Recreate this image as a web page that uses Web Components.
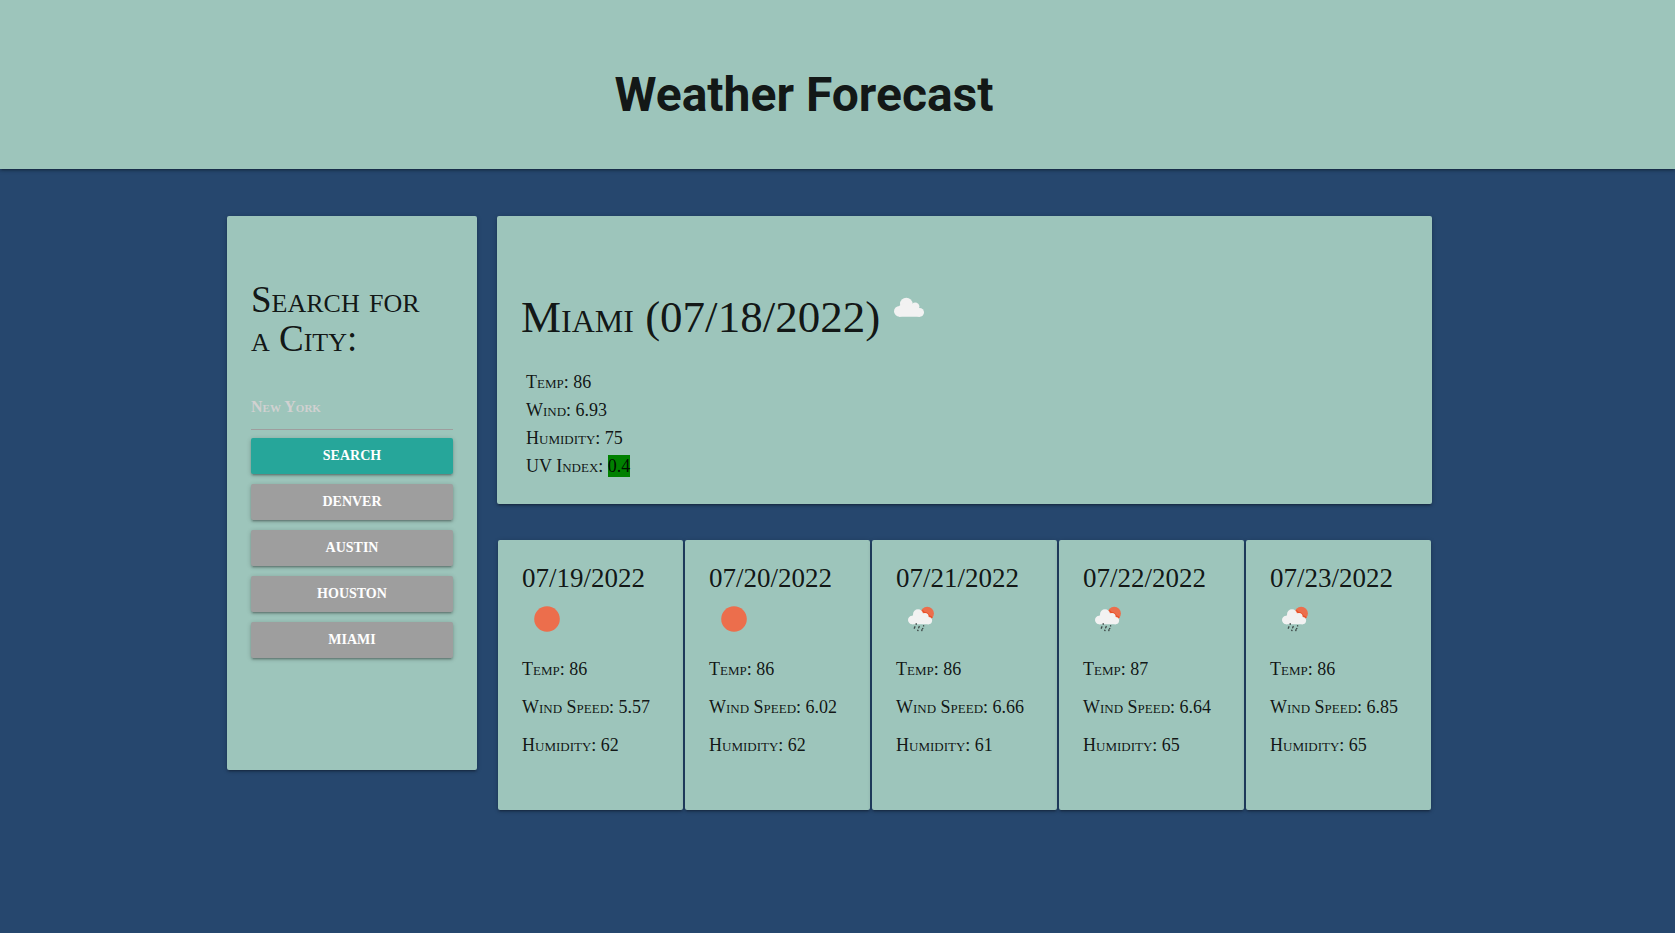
<!DOCTYPE html>
<html lang="en">
<head>
<meta charset="utf-8">
<meta name="viewport" content="width=device-width, initial-scale=1">
<title>Weather Forecast</title>
<style>
  html {
    --panel: #9dc5bb;
    --ink: rgba(0, 0, 0, 0.9);
    --depth: 0 2px 2px 0 rgba(0,0,0,.14), 0 3px 1px -2px rgba(0,0,0,.12), 0 1px 5px 0 rgba(0,0,0,.2);
    background: #26476e;
  }
  body {
    margin: 0;
    color: var(--ink);
    font-family: "Liberation Serif", "Times New Roman", serif;
    font-size: 18px;
  }
</style>
</head>
<body>
<weather-app></weather-app>

<script>
  function define(name, html, setup) {
    const template = document.createElement('template');
    template.innerHTML = html;
    customElements.define(name, class extends HTMLElement {
      constructor() {
        super();
        this.attachShadow({ mode: 'open' }).append(template.content.cloneNode(true));
      }
      connectedCallback() {
        if (setup) setup(this);
      }
    });
  }

  const icons = {
    cloud: `<g fill="#f2f2f2"><circle cx="22.3" cy="21" r="6.3"/><circle cx="31.2" cy="23.6" r="4.2"/>
      <circle cx="15.4" cy="28.3" r="5.4"/><circle cx="35.6" cy="29.3" r="4.4"/>
      <path d="M15 23L22 19L31 22L36 26V33.7H15Z"/></g>`,
    sun: `<circle cx="25" cy="25" r="12.8" fill="#ec6e4c"/>`,
    rain: `<circle cx="31.2" cy="19.5" r="6.7" fill="#ec6e4c"/>
      <path d="M26.2 16.5Q28 17.4 28.3 18.6Q31.5 18.2 33 21.8Q35.6 22.2 36.2 24" fill="none" stroke="#ea4d24" stroke-width="1.2"/>
      <g fill="#f2f2f2"><circle cx="22" cy="20.3" r="5"/><circle cx="29" cy="22.5" r="3.6"/>
      <circle cx="16.2" cy="26" r="4.2"/><circle cx="32.4" cy="26.6" r="3.7"/>
      <path d="M16 22L22 18L29 20L33 24V30.3H16Z"/></g>
      <g stroke="#3f4a49" stroke-width="1.4" stroke-linecap="round"><path d="M20.2 29.7v.5M18.9 32.8l-.6 1.4M23.2 32.6l-.5 1.2M27.6 31.8v.1M26.8 34.4l-.2.2M21.7 36.2l.3.3M26 35.8l-.2.7"/></g>`
  };

  define('weather-icon', `
    <style>
      :host { display: block; flex: none; width: 50px; height: 50px; }
      svg { display: block; width: 100%; height: 100%; }
    </style>
    <svg viewBox="0 0 50 50" aria-hidden="true"></svg>`,
    el => { el.shadowRoot.querySelector('svg').innerHTML = icons[el.getAttribute('kind')] || ''; });

  define('page-banner', `
    <style>
      :host { display: block; background: var(--panel); box-shadow: var(--depth); }
      header { padding: 67px 67px 46px 0; text-align: center; }
      h1 { margin: 0; font: 700 48px/56px Roboto, sans-serif; }
    </style>
    <header><h1><slot></slot></h1></header>`);

  define('panel-card', `
    <style>
      :host { display: block; padding: 24px; border-radius: 2px; background: var(--panel); box-shadow: var(--depth); }
    </style>
    <slot></slot>`);

  define('city-button', `
    <style>
      :host { display: block; --fill: #9e9e9e; }
      :host([primary]) { --fill: #26a69a; }
      button {
        display: block; width: 100%; height: 36px; padding: 0; border: 0; border-radius: 2px;
        background: var(--fill); box-shadow: var(--depth); color: #fff; cursor: pointer;
        font: 700 14px/36px "Liberation Serif", "Times New Roman", serif; text-transform: uppercase;
      }
    </style>
    <button type="button"><slot></slot></button>`);

  define('city-search', `
    <style>
      :host { display: block; }
      panel-card { padding-bottom: 112px; }
      h2 { margin: 40px 0 26px; font-size: 37px; line-height: 39px; font-weight: 400; font-variant: small-caps; }
      input {
        display: block; box-sizing: border-box; width: 100%; height: 46px; margin: 0 0 8px; padding: 0;
        border: 0; border-bottom: 1px solid #9e9e9e; background: none; outline: none; color: inherit;
        font: small-caps 700 16px "Liberation Serif", "Times New Roman", serif;
      }
      input::placeholder { color: #d1d1d1; opacity: 1; }
      .buttons { display: grid; gap: 10px; }
    </style>
    <panel-card>
      <h2><label for="city">Search for<br>a City:</label></h2>
      <input id="city" type="text" placeholder="New York">
      <div class="buttons">
        <city-button primary>Search</city-button>
        <city-button>Denver</city-button>
        <city-button>Austin</city-button>
        <city-button>Houston</city-button>
        <city-button>Miami</city-button>
      </div>
    </panel-card>`);

  define('current-weather', `
    <style>
      :host { display: block; }
      .title { display: flex; gap: 4px; margin-top: 43px; }
      h2 { margin: 0; font-size: 45px; line-height: 68px; font-weight: 400; font-variant: small-caps; }
      ul { margin: 17px 0 0; padding: 0 0 0 5px; list-style: none; line-height: 28px; font-variant: small-caps; }
      .uv { display: inline-block; line-height: 22px; background: #008000; }
    </style>
    <panel-card>
      <div class="title"><h2>Miami (07/18/2022)</h2><weather-icon kind="cloud"></weather-icon></div>
      <ul>
        <li>Temp: 86</li>
        <li>Wind: 6.93</li>
        <li>Humidity: 75</li>
        <li>UV Index: <span class="uv">0.4</span></li>
      </ul>
    </panel-card>`);

  define('forecast-day', `
    <style>
      :host { display: block; }
      panel-card { padding-bottom: 46px; font-variant: small-caps; white-space: nowrap; }
      h3 { margin: 0 0 2px; font-size: 27px; line-height: 28px; font-weight: 400; }
      p { margin: 0; line-height: 38px; }
      weather-icon { margin-bottom: 6px; }
    </style>
    <panel-card>
      <h3></h3>
      <weather-icon></weather-icon>
      <p class="temp"></p>
      <p class="wind"></p>
      <p class="humidity"></p>
    </panel-card>`,
    el => {
      const find = s => el.shadowRoot.querySelector(s);
      find('h3').textContent = el.getAttribute('date');
      find('.temp').textContent = 'Temp: ' + el.getAttribute('temp');
      find('.wind').textContent = 'Wind Speed: ' + el.getAttribute('wind');
      find('.humidity').textContent = 'Humidity: ' + el.getAttribute('humidity');
      const icon = document.createElement('weather-icon');
      icon.setAttribute('kind', el.getAttribute('kind'));
      find('weather-icon').replaceWith(icon);
    });

  define('weather-app', `
    <style>
      :host { display: block; }
      main {
        display: grid; grid-template-columns: 250px minmax(0, 1fr); gap: 20px; align-items: start;
        padding: 47px 243px 40px 227px;
      }
      .days { display: grid; grid-template-columns: repeat(5, minmax(0, 1fr)); gap: 2px; margin: 36px 1px 0; }
      @media (max-width: 1300px) { main { padding-left: 24px; padding-right: 24px; } }
      @media (max-width: 1100px) {
        main { grid-template-columns: minmax(0, 1fr); }
        .days { grid-template-columns: repeat(auto-fit, minmax(185px, 1fr)); }
      }
    </style>
    <page-banner>Weather Forecast</page-banner>
    <main>
      <city-search></city-search>
      <section>
        <current-weather></current-weather>
        <div class="days">
          <forecast-day date="07/19/2022" kind="sun" temp="86" wind="5.57" humidity="62"></forecast-day>
          <forecast-day date="07/20/2022" kind="sun" temp="86" wind="6.02" humidity="62"></forecast-day>
          <forecast-day date="07/21/2022" kind="rain" temp="86" wind="6.66" humidity="61"></forecast-day>
          <forecast-day date="07/22/2022" kind="rain" temp="87" wind="6.64" humidity="65"></forecast-day>
          <forecast-day date="07/23/2022" kind="rain" temp="86" wind="6.85" humidity="65"></forecast-day>
        </div>
      </section>
    </main>`);
</script>
</body>
</html>
